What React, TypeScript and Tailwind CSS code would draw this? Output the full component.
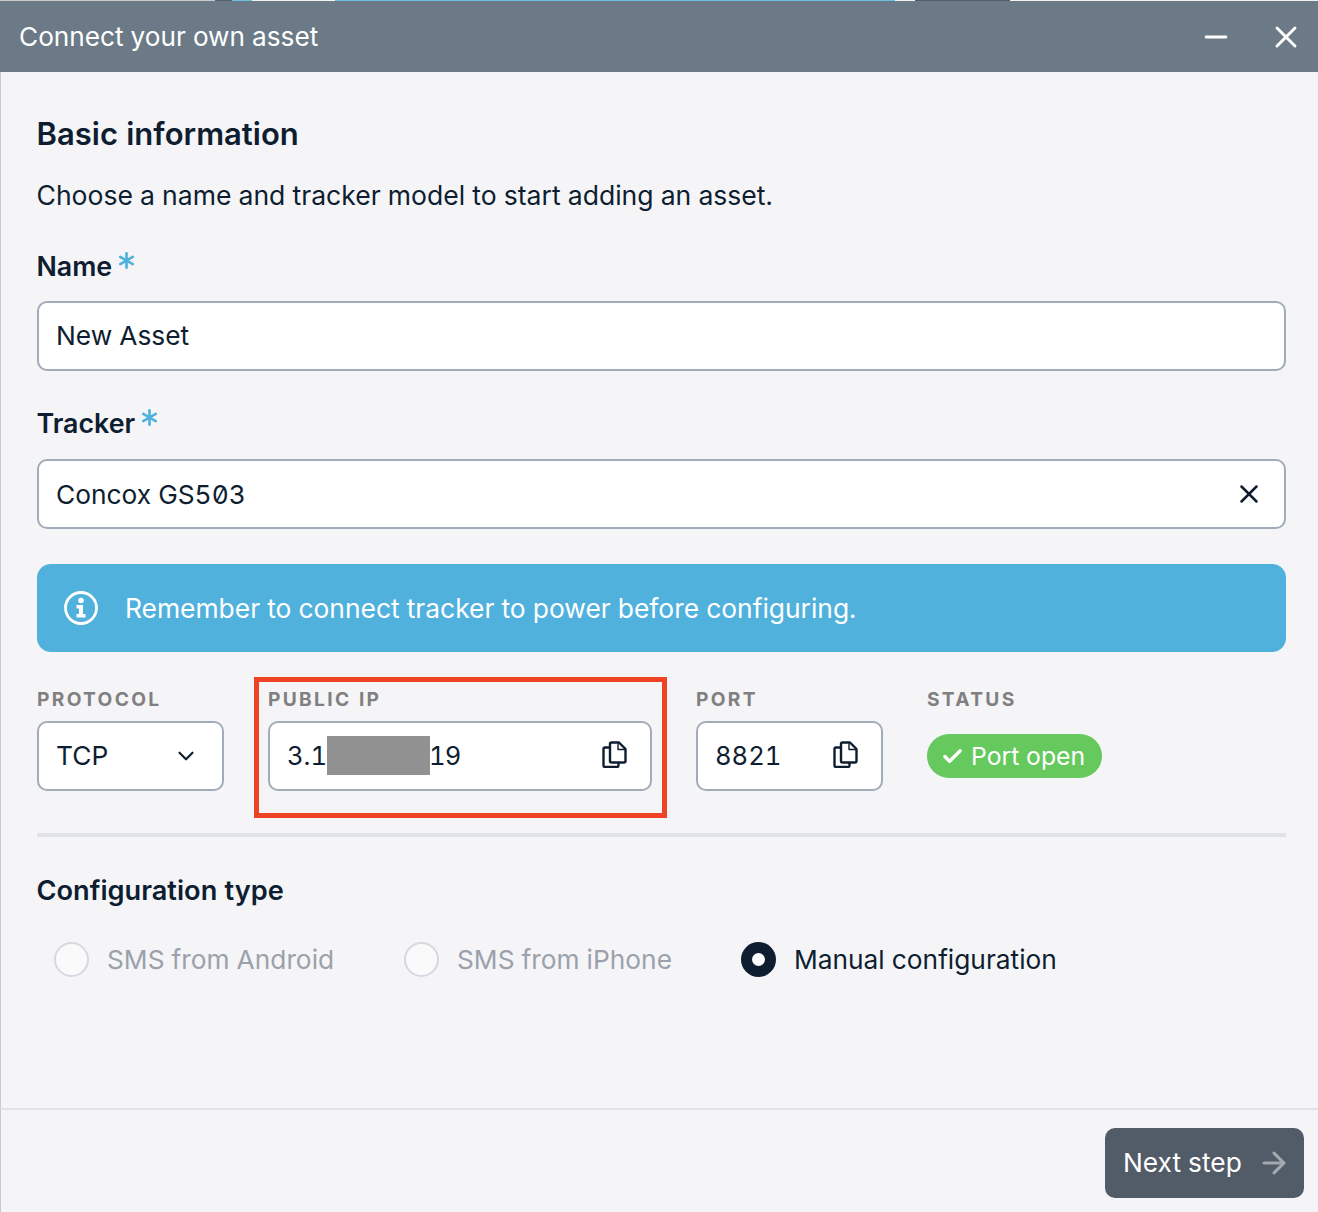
import { ArrowRight, Asterisk, Check, ChevronDown, Minus, X } from "lucide-react";

function CopyIcon() {
  return (
    <svg width="25" height="27" viewBox="0 0 25 27" fill="none" stroke="#0e1e30" strokeWidth="2.4" strokeLinejoin="round">
      <path d="M9.500 1.500h7.500l6.500 6.500v12a1.500 1.500 0 0 1-1.500 1.500H9.500A1.500 1.500 0 0 1 8 20V3a1.500 1.500 0 0 1 1.500-1.500z" />
      <path d="M16 1.500v7h7.500" strokeWidth="1.4" />
      <path d="M8 6.500H3A1.500 1.500 0 0 0 1.500 8v16.500A1.500 1.500 0 0 0 3 26h12a1.500 1.500 0 0 0 1.500-1.500v-3" />
    </svg>
  );
}

function InfoIcon() {
  return (
    <svg width="36" height="36" viewBox="0 0 36 36" fill="none">
      <circle cx="18" cy="18" r="15.500" stroke="#fff" strokeWidth="2.800" />
      <circle cx="18" cy="10.500" r="2.800" fill="#fff" />
      <path d="M13.500 15h6.500v9h2.500v3.500h-9V24h2.500v-5.500h-2.500z" fill="#fff" />
    </svg>
  );
}

function FieldLabel({ children }: { children: string }) {
  return (
    <div className="-ml-[0.5px] flex items-start text-[26.800px] leading-[32px] font-semibold text-[#0e1e30]">
      {children}
      <Asterisk className="-mt-[4px] h-[29px] w-[29px] text-[#50b1dd]" strokeWidth={2.2} />
    </div>
  );
}

function SmallLabel({ children }: { children: string }) {
  return <div className="h-[34px] text-[19.200px] leading-[24px] font-bold tracking-[0.12em] text-[#808080]">{children}</div>;
}

function Radio({ label, checked }: { label: string; checked?: boolean }) {
  return (
    <div className={`flex items-center gap-[18px] text-[26.300px] ${checked ? "text-[#0e1e30]" : "text-[#9ba1aa]"}`}>
      {checked ? (
        <div className="flex h-[35px] w-[35px] items-center justify-center rounded-full bg-[#0e1e30]">
          <div className="h-[13px] w-[13px] rounded-full bg-white" />
        </div>
      ) : (
        <div className="h-[35px] w-[35px] rounded-full border-2 border-[#d5d8de] bg-[#fafafa]" />
      )}
      {label}
    </div>
  );
}

export default function App() {
  return (
    <div className="flex h-[1212px] w-[1318px] flex-col overflow-hidden bg-[#f5f5f8] font-['Inter',sans-serif] text-[#0e1e30] tabular-nums slashed-zero">
      {/* whatever sits behind the modal, peeking out at the top */}
      <div className="flex h-px shrink-0 bg-[#f2f2f2]">
        <div className="w-[215px] bg-[#c9c9c9]" />
        <div className="w-[17px] bg-[#556270]" />
        <div className="w-[20px] bg-[#6cc0dd]" />
        <div className="w-[83px]" />
        <div className="w-[560px] bg-[#6cc0dd]" />
        <div className="w-[20px]" />
        <div className="w-[95px] bg-[#555e68]" />
      </div>

      <div className="flex h-[71px] shrink-0 items-center bg-[#6b7a86] pl-[19px] pr-[14px] text-white">
        <div className="flex-1 pt-px text-[26.200px]">Connect your own asset</div>
        <Minus className="mr-[35px] h-[34px] w-[34px]" strokeWidth={2} />
        <X className="h-[36px] w-[36px]" strokeWidth={1.9} />
      </div>

      <div className="flex min-h-0 flex-1 flex-col border-l border-l-[#c8cacf] pl-[36px] pr-[32px]">
        <h1 className="mt-[43px] -ml-[0.5px] text-[31px] leading-[38px] font-semibold">Basic information</h1>
        <p className="mt-[25px] -ml-[0.5px] text-[26.550px] leading-[34px]">Choose a name and tracker model to start adding an asset.</p>

        <div className="mt-[38px]">
          <FieldLabel>Name</FieldLabel>
        </div>
        <div className="mt-[19px] flex h-[70px] items-center rounded-[10px] border-2 border-[#a2acb9] bg-white pl-[17px] text-[26.300px]">New Asset</div>

        <div className="mt-[36px]">
          <FieldLabel>Tracker</FieldLabel>
        </div>
        <div className="mt-[20px] flex h-[70px] items-center justify-between rounded-[10px] border-2 border-[#a2acb9] bg-white pl-[17px] pr-[20px] text-[26.300px]">
          <span className="pt-[2px]">Concox GS503</span>
          <X className="h-[30px] w-[30px]" strokeWidth={2} />
        </div>

        <div className="mt-[35px] flex h-[88px] items-center gap-[26px] rounded-[14px] bg-[#50b1dd] pl-[26px] text-[26.400px] text-white">
          <InfoIcon />
          <span className="pt-[2px]">Remember to connect tracker to power before configuring.</span>
        </div>

        <div className="mt-[35px] flex gap-[44px]">
          <div className="w-[187px]">
            <SmallLabel>PROTOCOL</SmallLabel>
            <div className="flex h-[70px] items-center justify-between rounded-[10px] border-2 border-[#a2acb9] bg-white pl-[17px] pr-[23px] text-[26.300px]">
              TCP
              <ChevronDown className="h-[26px] w-[26px]" strokeWidth={2} />
            </div>
          </div>

          <div className="relative w-[384px]">
            <SmallLabel>PUBLIC IP</SmallLabel>
            <div className="flex h-[70px] items-center rounded-[10px] border-2 border-[#a2acb9] bg-white pl-[17px] pr-[23px] text-[25.600px]">
              3.1
              <div className="mb-[2px] h-[39px] w-[103px] bg-[#919191]" />
              <span className="-ml-px tracking-[-1px]">19</span>
              <div className="mb-[4px] ml-auto">
                <CopyIcon />
              </div>
            </div>
            {/* red annotation drawn over the screenshot */}
            <div className="absolute -top-[10px] -left-[14px] h-[141px] w-[413px] border-[5px] border-[#ef4326]" />
          </div>

          <div className="w-[187px]">
            <SmallLabel>PORT</SmallLabel>
            <div className="flex h-[70px] items-center justify-between rounded-[10px] border-2 border-[#a2acb9] bg-white pl-[17px] pr-[23px] text-[25.600px]">
              8821
              <div className="mb-[4px]">
                <CopyIcon />
              </div>
            </div>
          </div>

          <div>
            <SmallLabel>STATUS</SmallLabel>
            <div className="mt-[13px] flex h-[44px] w-[175px] items-center gap-[7px] rounded-full bg-[#65c95e] pl-[14px] text-[24.800px] text-white">
              <Check className="h-[23px] w-[23px]" strokeWidth={3.5} />
              <span className="pt-[2px]">Port open</span>
            </div>
          </div>
        </div>

        <div className="mt-[42px] h-[4px] bg-[#e0e4ea]" />

        <h2 className="mt-[37px] -ml-[0.5px] text-[27.200px] leading-[34px] font-semibold">Configuration type</h2>

        <div className="mt-[32px] flex pl-[17px]">
          <div className="w-[350px]">
            <Radio label="SMS from Android" />
          </div>
          <div className="w-[337px]">
            <Radio label="SMS from iPhone" />
          </div>
          <Radio label="Manual configuration" checked />
        </div>
      </div>

      <div className="flex h-[104px] shrink-0 items-start justify-end border-t-2 border-t-[#e0e4ea] border-l border-l-[#c8cacf] pr-[14px] pt-[18px]">
        <div className="flex h-[70px] w-[199px] items-center gap-[15px] rounded-[10px] bg-[#525b68] pl-[18px] text-[26.300px] text-white">
          Next step
          <ArrowRight className="h-[34px] w-[34px] text-[#a4a9b0]" strokeWidth={2.2} />
        </div>
      </div>
    </div>
  );
}
